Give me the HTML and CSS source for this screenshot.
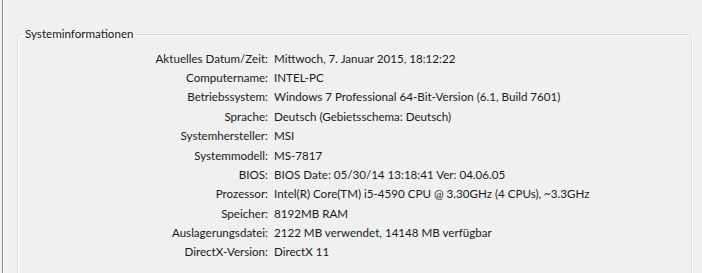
FILE: index.html
```html
<!DOCTYPE html>
<html lang="de">
<head>
<meta charset="utf-8">
<title>Systeminformationen</title>
<link rel="stylesheet" href="styles.css">
</head>
<body>
<div class="window">
  <fieldset class="group">
    <legend class="group-title">Systeminformationen</legend>
    <dl class="info">
      <dt>Aktuelles Datum/Zeit:</dt><dd>Mittwoch, 7. Januar 2015, 18:12:22</dd>
      <dt>Computername:</dt><dd>INTEL-PC</dd>
      <dt>Betriebssystem:</dt><dd>Windows 7 Professional 64-Bit-Version (6.1, Build 7601)</dd>
      <dt>Sprache:</dt><dd>Deutsch (Gebietsschema: Deutsch)</dd>
      <dt>Systemhersteller:</dt><dd>MSI</dd>
      <dt>Systemmodell:</dt><dd>MS-7817</dd>
      <dt>BIOS:</dt><dd>BIOS Date: 05/30/14 13:18:41 Ver: 04.06.05</dd>
      <dt>Prozessor:</dt><dd>Intel(R) Core(TM) i5-4590 CPU @ 3.30GHz (4 CPUs), ~3.3GHz</dd>
      <dt>Speicher:</dt><dd>8192MB RAM</dd>
      <dt>Auslagerungsdatei:</dt><dd>2122 MB verwendet, 14148 MB verfügbar</dd>
      <dt>DirectX-Version:</dt><dd>DirectX 11</dd>
    </dl>
  </fieldset>
</div>
</body>
</html>
```
FILE: styles.css
```css
html, body {
  margin: 0;
  padding: 0;
  background: #f0f0f0;
  height: 100%;
  overflow: hidden;
}
body {
  font-family: Lato, "Noto Sans", "Liberation Sans", sans-serif;
  font-size: 11.6px;
  color: #1a1a1a;
}
.window {
  margin-left: 2px;
  height: 100%;
  border-left: 1px solid #8a8a8a;
  box-shadow: inset 1px 0 0 #ffffff;
  padding: 27px 10px 0 14px;
  box-sizing: border-box;
  overflow: hidden;
}
.group {
  margin: 0;
  padding: 0;
  height: 260px;
  border: 1px solid #d5dfe5;
  border-radius: 3px;
  box-shadow: inset 1px 1px 0 #ffffff, 1px 1px 0 #ffffff;
  min-width: 0;
}
.group-title {
  margin-left: 5px;
  padding: 0 2px;
  line-height: 14px;
}
.info {
  display: grid;
  grid-template-columns: 250px auto;
  grid-auto-rows: 19.4px;
  column-gap: 6px;
  margin: 7.4px 0 0 0;
  align-items: center;
}
.info dt {
  text-align: right;
  white-space: nowrap;
}
.info dd {
  margin: 0;
  white-space: nowrap;
}
```
